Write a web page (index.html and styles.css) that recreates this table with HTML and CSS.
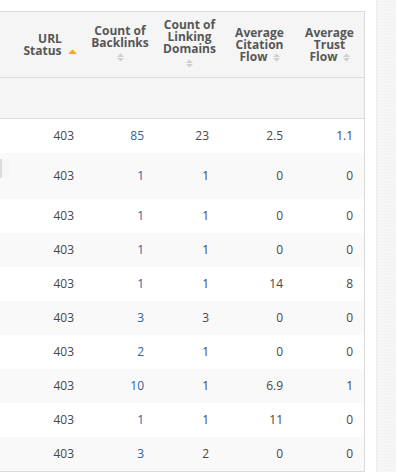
FILE: index.html
```html
<!DOCTYPE html>
<html>
<head>
<meta charset="utf-8">
<link rel="stylesheet" href="styles.css">
</head>
<body>
<div class="page">
  <div class="tablewrap">
    <table class="grid">
      <colgroup>
        <col class="c0"><col class="c1"><col class="c2"><col class="c3"><col class="c4"><col class="c5">
      </colgroup>
      <thead>
        <tr class="head">
          <th></th>
          <th><div class="hd"><span>URL</span><span>Status <svg class="sort-asc" width="9" height="5" viewBox="0 0 9 5"><polygon points="0,5 4.5,0.5 9,5" fill="#f5a623"/></svg></span></div></th>
          <th><div class="hd"><span>Count of</span><span>Backlinks</span><span class="icoline"><svg class="sort" width="7" height="9" viewBox="0 0 7 9"><polygon points="0,4 3.5,0.5 7,4" fill="#cfcfcf"/><polygon points="0,5 3.5,8.5 7,5" fill="#cfcfcf"/></svg></span></div></th>
          <th><div class="hd"><span>Count of</span><span>Linking</span><span>Domains</span><span class="icoline"><svg class="sort" width="7" height="9" viewBox="0 0 7 9"><polygon points="0,4 3.5,0.5 7,4" fill="#cfcfcf"/><polygon points="0,5 3.5,8.5 7,5" fill="#cfcfcf"/></svg></span></div></th>
          <th><div class="hd"><span>Average</span><span>Citation</span><span>Flow <svg class="sort" width="7" height="9" viewBox="0 0 7 9"><polygon points="0,4 3.5,0.5 7,4" fill="#cfcfcf"/><polygon points="0,5 3.5,8.5 7,5" fill="#cfcfcf"/></svg></span></div></th>
          <th><div class="hd"><span>Average</span><span>Trust</span><span>Flow <svg class="sort" width="7" height="9" viewBox="0 0 7 9"><polygon points="0,4 3.5,0.5 7,4" fill="#cfcfcf"/><polygon points="0,5 3.5,8.5 7,5" fill="#cfcfcf"/></svg></span></div></th>
        </tr>
        <tr class="filter">
          <td><div class="fl"></div></td><td></td><td></td><td></td><td></td><td></td>
        </tr>
      </thead>
      <tbody>
        <tr><td></td><td>403</td><td><a>85</a></td><td>23</td><td>2.5</td><td>1.1</td></tr>
        <tr><td><div class="urlcell"><div class="btn"></div></div></td><td>403</td><td><a>1</a></td><td>1</td><td>0</td><td>0</td></tr>
        <tr><td></td><td>403</td><td><a>1</a></td><td>1</td><td>0</td><td>0</td></tr>
        <tr><td></td><td>403</td><td><a>1</a></td><td>1</td><td>0</td><td>0</td></tr>
        <tr><td></td><td>403</td><td><a>1</a></td><td>1</td><td>14</td><td>8</td></tr>
        <tr><td></td><td>403</td><td><a>3</a></td><td>3</td><td>0</td><td>0</td></tr>
        <tr><td></td><td>403</td><td><a>2</a></td><td>1</td><td>0</td><td>0</td></tr>
        <tr><td></td><td>403</td><td><a>10</a></td><td>1</td><td>6.9</td><td>1</td></tr>
        <tr><td></td><td>403</td><td><a>1</a></td><td>1</td><td>11</td><td>0</td></tr>
        <tr><td></td><td>403</td><td><a>3</a></td><td>2</td><td>0</td><td>0</td></tr>
      </tbody>
    </table>
  </div>
  <div class="side"></div>
</div>
</body>
</html>
```

FILE: styles.css
```css
html, body {
  margin: 0;
  padding: 0;
  background: #ffffff;
}

.page {
  display: flex;
  width: 396px;
  height: 472px;
  overflow: hidden;
  font-family: "Open Sans", "DejaVu Sans", sans-serif;
}

.tablewrap {
  flex: 0 0 450px;
  width: 450px;
  margin-left: -85px;
  padding-top: 11px;
}

.side {
  flex: 1 1 auto;
  margin-left: 11px;
  background-color: #f6f6f6;
  background-image: radial-gradient(rgba(0,0,0,0.035) 0.6px, transparent 0.9px);
  background-size: 3px 3px;
  border-left: 1px solid #ececec;
}

.grid {
  width: 450px;
  table-layout: fixed;
  border-collapse: separate;
  border-spacing: 0;
  border-top: 1px solid #dcdcdc;
  border-right: 1px solid #dcdcdc;
  border-bottom: 1px solid #dcdcdc;
}

.c0 { width: 100px; }
.c1 { width: 70px; }
.c2 { width: 70px; }
.c3 { width: 69px; }
.c4 { width: 71px; }
.c5 { width: 69px; }

.head th {
  padding: 0;
  background: #f5f5f5;
  border-bottom: 1px solid #dcdcdc;
  vertical-align: middle;
}

.hd {
  height: 65px;
  display: flex;
  flex-direction: column;
  justify-content: center;
  align-items: center;
  text-align: center;
  font-size: 12px;
  line-height: 12px;
  font-weight: 700;
  color: #575757;
  white-space: nowrap;
}

.hd span {
  display: block;
}

.icoline {
  height: 14px;
  display: flex !important;
  align-items: center;
  justify-content: center;
  padding-top: 1px;
}

.sort {
  vertical-align: -1px;
  margin-left: 2px;
}

.icoline .sort {
  margin-left: 0;
}

.sort-asc {
  vertical-align: 1px;
  margin-left: 3px;
}

.filter td {
  padding: 0;
  background: #f5f5f5;
  border-bottom: 1px solid #dcdcdc;
}

.fl {
  height: 40px;
}

tbody td {
  padding: 0 11px 0 0;
  line-height: 34px;
  text-align: right;
  font-size: 12px;
  color: #474747;
  vertical-align: middle;
  white-space: nowrap;
}

tbody td:nth-child(4) {
  padding-right: 15px;
}

tbody td:nth-child(5) {
  padding-right: 12px;
}

tbody tr:nth-child(even) td {
  background: #f9f9f9;
}

tbody a {
  color: #2f62a8;
  text-decoration: none;
}

.urlcell {
  height: 46px;
  line-height: 0;
  padding-top: 6px;
  box-sizing: border-box;
}

.btn {
  width: 40px;
  height: 19px;
  margin: 0 -5px 0 auto;
  background: linear-gradient(to right, #f1f1f1 0, #f1f1f1 31px, #dcdcdc 31px, #dcdcdc 33px, #f6f6f6 33px, #f6f6f6 100%);
}
```
